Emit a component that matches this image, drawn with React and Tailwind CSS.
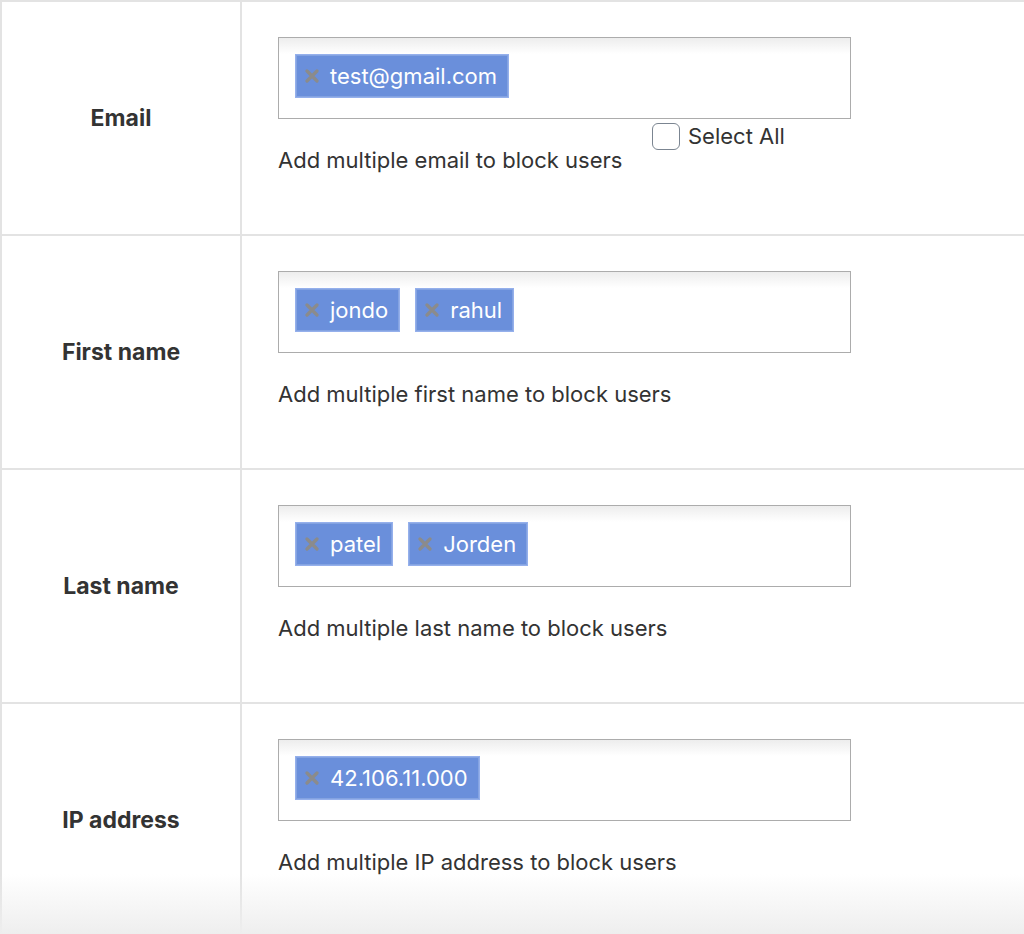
import React from 'react';

const rows = [
    { label: 'Email', tags: ['test@gmail.com'], hint: 'Add multiple email to block users', selectAll: true },
    { label: 'First name', tags: ['jondo', 'rahul'], hint: 'Add multiple first name to block users' },
    { label: 'Last name', tags: ['patel', 'Jorden'], hint: 'Add multiple last name to block users' },
    { label: 'IP address', tags: ['42.106.11.000'], hint: 'Add multiple IP address to block users' },
];

const RemoveIcon = () => (
    <svg width="14" height="14" viewBox="0 0 14 14" className="shrink-0">
        <path d="M2 2 L12 12 M12 2 L2 12" stroke="#8b8b8b" strokeWidth="3.2" strokeLinecap="round" />
    </svg>
);

const Tag = ({ text }) => (
    <span className="flex items-center gap-[11px] h-[44px] pl-[9px] pr-[11px] bg-[#6a8fdb] border border-[#95b0ec] shadow-[inset_0_0_0_1px_rgba(255,255,255,0.18)] text-white text-[22px]">
        <RemoveIcon />
        {text}
    </span>
);

const App = () => {
    return (
        <div className="relative w-[1024px] h-[934px] overflow-hidden bg-white text-[#333] font-['Inter','Liberation_Sans',sans-serif]">
            <div className="border-t-2 border-l-2 border-[#e3e3e3]">
                {rows.map((row) => (
                    <div key={row.label} className="flex h-[234px] border-b-2 border-[#e3e3e3]">
                        {/* Label column */}
                        <div className="w-[240px] shrink-0 border-r-2 border-[#e3e3e3] flex items-center justify-center font-bold text-[23px]">
                            {row.label}
                        </div>

                        {/* Field column */}
                        <div className="pl-[36px] pt-[35px]">
                            <div className="w-[573px] h-[82px] border-[1.5px] border-[#acacac] bg-[linear-gradient(to_bottom,#ededed_0%,#ffffff_20%)] flex gap-[15px] pt-[16px] pl-[16px]">
                                {row.tags.map((t) => (
                                    <Tag key={t} text={t} />
                                ))}
                            </div>
                            <div className="flex items-start">
                                <p className="w-[374px] shrink-0 whitespace-nowrap mt-[26px] text-[22px] leading-[30px]">
                                    {row.hint}
                                </p>
                                {row.selectAll && (
                                    <label className="flex items-center gap-[8px] mt-[2px] text-[22px] leading-[30px]">
                                        <span className="w-[28px] h-[27px] rounded-[6px] border-[1.5px] border-[#7b8591] bg-white" />
                                        Select All
                                    </label>
                                )}
                            </div>
                        </div>
                    </div>
                ))}
            </div>

            {/* bottom fade of the screenshot */}
            <div className="pointer-events-none absolute inset-x-0 bottom-0 h-[60px] bg-[linear-gradient(to_bottom,rgba(238,238,238,0)_0%,#eeeeee_100%)]" />
        </div>
    );
};

export default App;
